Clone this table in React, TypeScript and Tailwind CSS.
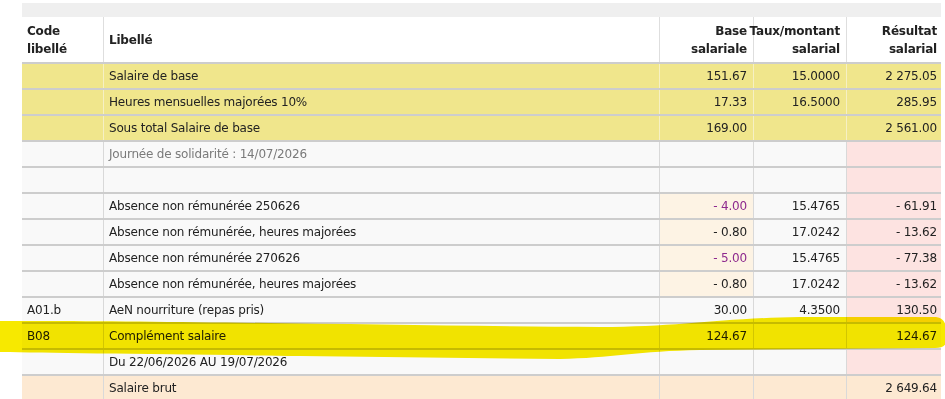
import React from "react";

type Row = {
  code?: string;
  label: string;
  base?: string;
  rate?: string;
  result?: string;
  tone: "yellow" | "white" | "brut";
  muted?: boolean;
  baseBg?: boolean;
  basePurple?: boolean;
  pink?: boolean;
};

const rows: Row[] = [
  { label: "Salaire de base", base: "151.67", rate: "15.0000", result: "2 275.05", tone: "yellow" },
  { label: "Heures mensuelles majorées 10%", base: "17.33", rate: "16.5000", result: "285.95", tone: "yellow" },
  { label: "Sous total Salaire de base", base: "169.00", result: "2 561.00", tone: "yellow" },
  { label: "Journée de solidarité : 14/07/2026", tone: "white", muted: true, pink: true },
  { label: "", tone: "white", pink: true },
  { label: "Absence non rémunérée 250626", base: "- 4.00", rate: "15.4765", result: "- 61.91", tone: "white", baseBg: true, basePurple: true, pink: true },
  { label: "Absence non rémunérée, heures majorées", base: "- 0.80", rate: "17.0242", result: "- 13.62", tone: "white", baseBg: true, pink: true },
  { label: "Absence non rémunérée 270626", base: "- 5.00", rate: "15.4765", result: "- 77.38", tone: "white", baseBg: true, basePurple: true, pink: true },
  { label: "Absence non rémunérée, heures majorées", base: "- 0.80", rate: "17.0242", result: "- 13.62", tone: "white", baseBg: true, pink: true },
  { code: "A01.b", label: "AeN nourriture (repas pris)", base: "30.00", rate: "4.3500", result: "130.50", tone: "white", pink: true },
  { code: "B08", label: "Complément salaire", base: "124.67", result: "124.67", tone: "white" },
  { label: "Du 22/06/2026 AU 19/07/2026", tone: "white", pink: true },
  { label: "Salaire brut", result: "2 649.64", tone: "brut" },
];

const grid = "grid grid-cols-[82px_556px_94px_93px_94px]";

function BodyRow({ row }: { row: Row }) {
  const rowBg =
    row.tone === "yellow" ? "bg-[#f0e68c]" : row.tone === "brut" ? "bg-[#fde9d2]" : "bg-[#f9f9f9]";
  const line = row.tone === "yellow" ? "border-[#f6f0c4]" : "border-[#d9d9d9]";
  const cell = `flex items-center border-r ${line}`;
  return (
    <div className={`${grid} h-[26px] border-b-2 border-[#cdcdcd] ${rowBg}`}>
      <div className={`${cell} pl-[5px]`}>{row.code}</div>
      <div className={`${cell} pl-[5px] ${row.muted ? "text-[#7a7a7a]" : ""}`}>{row.label}</div>
      <div
        className={`${cell} justify-end pr-[6px] ${row.baseBg ? "bg-[#fdf3e4]" : ""} ${
          row.basePurple ? "text-[#8e2a8e]" : ""
        }`}
      >
        {row.base}
      </div>
      <div className={`${cell} justify-end pr-[6px]`}>{row.rate}</div>
      <div className={`flex items-center justify-end pr-[4px] ${row.pink ? "bg-[#fde3e1]" : ""}`}>
        {row.result}
      </div>
    </div>
  );
}

export default function App() {
  return (
    <div className="relative h-[399px] w-[945px] overflow-hidden bg-white font-['DejaVu_Sans',sans-serif] text-[12px] tracking-[-0.2px] text-[#222]">
      <div className="w-[941px] pl-[22px] pt-[3px]">
        <div className="h-[14px] bg-[#efefef]" />

        {/* header */}
        <div className={`${grid} h-[47px] border-b-2 border-[#cdcdcd] bg-white font-bold leading-[18px]`}>
          <div className="flex items-center border-r border-[#dedede] pl-[5px]">
            Code
            <br />
            libellé
          </div>
          <div className="flex items-center border-r border-[#dedede] pl-[5px]">Libellé</div>
          <div className="flex items-center justify-end border-r border-[#dedede] pr-[6px] text-right">
            Base
            <br />
            salariale
          </div>
          <div className="flex items-center justify-end border-r border-[#dedede] pr-[6px] text-right">
            Taux/montant
            <br />
            salarial
          </div>
          <div className="flex items-center justify-end pr-[4px] text-right">
            Résultat
            <br />
            salarial
          </div>
        </div>

        {rows.map((r, i) => (
          <BodyRow key={i} row={r} />
        ))}
      </div>

      {/* marker stroke over the B08 line */}
      <svg className="pointer-events-none absolute left-0 top-0 mix-blend-multiply" width="945" height="399">
        <path
          d="M 0 321 C 150 320, 400 326, 600 327 C 680 327, 720 318, 800 317 L 936 317 Q 946 318 946 330 L 946 343 Q 944 348 935 348 L 700 350 C 640 351, 610 358, 560 359 L 300 356 C 150 354, 50 353, 0 352 Z"
          fill="#f7e900"
        />
      </svg>
    </div>
  );
}
